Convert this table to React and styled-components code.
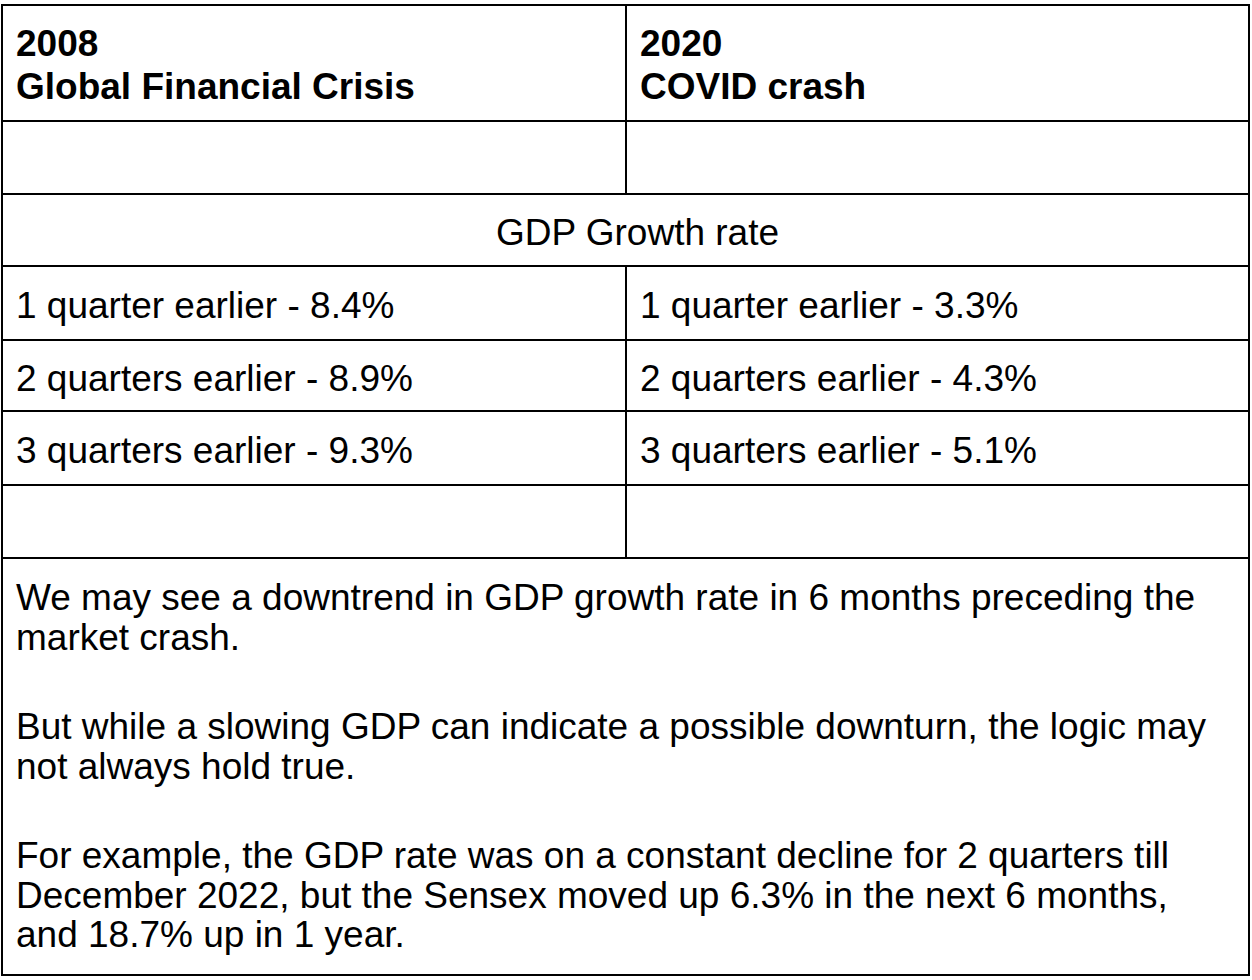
import React from "react";
import styled, { createGlobalStyle } from "styled-components";

const GlobalStyle = createGlobalStyle`
  body {
    margin: 0;
    background: #fff;
    font-family: "Liberation Sans", Arial, sans-serif;
    color: #000;
  }
`;

const StyleTable = styled.div`
  display: grid;
  grid-template-columns: 622px 621px;
  grid-template-rows: 114px 71px 70px 72px 69px 72px 71px 415px;
  gap: 2px;
  padding: 2px;
  width: 1249px;
  box-sizing: border-box;
  margin: 4px 0 0 1px;
  background: #000;
`;

const StyleCell = styled.div`
  background: #fff;
  box-sizing: border-box;
  padding: 6px 13px 0;
  font-size: 37px;
  line-height: 38px;
  display: flex;
  align-items: center;
  grid-column: ${(p) => (p.$full ? "1 / -1" : "auto")};
  justify-content: ${(p) => (p.$center ? "center" : "flex-start")};
  padding-left: ${(p) => (p.$center ? "37px" : "13px")};
`;

const StyleHead = styled.div`
  background: #fff;
  padding: 16px 13px 0;
  font-size: 37px;
  line-height: 43px;
  font-weight: 700;
`;

const StyleNote = styled.div`
  grid-column: 1 / -1;
  background: #fff;
  padding: 19px 13px 0;
  font-size: 37px;
  line-height: 39.5px;
  p {
    margin: 0;
  }
  p + p {
    margin-top: 50px;
  }
`;

const rows = [
  ["1 quarter earlier - 8.4%", "1 quarter earlier - 3.3%"],
  ["2 quarters earlier - 8.9%", "2 quarters earlier - 4.3%"],
  ["3 quarters earlier - 9.3%", "3 quarters earlier - 5.1%"],
];

export default function App() {
  return (
    <>
      <GlobalStyle />
      <StyleTable>
        <StyleHead>
          2008
          <br />
          Global Financial Crisis
        </StyleHead>
        <StyleHead>
          2020
          <br />
          COVID crash
        </StyleHead>
        <StyleCell />
        <StyleCell />
        <StyleCell $full $center>
          GDP Growth rate
        </StyleCell>
        {rows.map((row) =>
          row.map((text) => <StyleCell key={text}>{text}</StyleCell>)
        )}
        <StyleCell />
        <StyleCell />
        <StyleNote>
          <p>
            We may see a downtrend in GDP growth rate in 6 months preceding the
            market crash.
          </p>
          <p>
            But while a slowing GDP can indicate a possible downturn, the logic
            may not always hold true.
          </p>
          <p>
            For example, the GDP rate was on a constant decline for 2 quarters
            till December 2022, but the Sensex moved up 6.3% in the next 6
            months, and 18.7% up in 1 year.
          </p>
        </StyleNote>
      </StyleTable>
    </>
  );
}
